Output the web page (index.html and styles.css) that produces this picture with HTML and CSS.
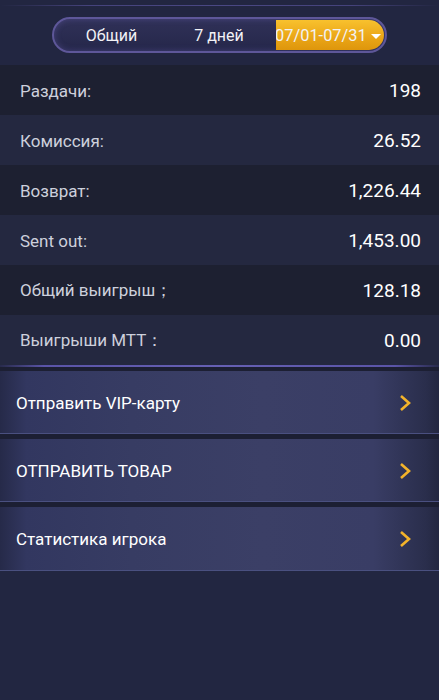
FILE: index.html
```html
<!DOCTYPE html>
<html lang="ru">
<head>
<meta charset="utf-8">
<link rel="stylesheet" href="styles.css">
</head>
<body>
<div class="page">
  <header class="header">
    <div class="top-line"></div>
    <div class="seg">
      <div class="seg-item seg-a">Общий</div>
      <div class="seg-item seg-b">7 дней</div>
      <div class="seg-item seg-c active"><span class="range">07/01-07/31</span><span class="tri"></span></div>
    </div>
  </header>
  <section class="stats">
    <div class="row"><span class="label">Раздачи:</span><span class="val">198</span></div>
    <div class="row"><span class="label">Комиссия:</span><span class="val">26.52</span></div>
    <div class="row"><span class="label">Возврат:</span><span class="val">1,226.44</span></div>
    <div class="row"><span class="label">Sent out:</span><span class="val">1,453.00</span></div>
    <div class="row"><span class="label">Общий выигрыш；</span><span class="val">128.18</span></div>
    <div class="row"><span class="label">Выигрыши MTT：</span><span class="val">0.00</span></div>
  </section>
  <div class="stats-line"></div>
  <nav class="menu">
    <div class="item"><span>Отправить VIP-карту</span><svg class="chev" width="12" height="18" viewBox="0 0 12 18"><path d="M2 2 L10 9 L2 16" fill="none" stroke="#f3b32a" stroke-width="2.6" stroke-linejoin="miter" stroke-linecap="butt"/></svg></div>
    <div class="item"><span>ОТПРАВИТЬ ТОВАР</span><svg class="chev" width="12" height="18" viewBox="0 0 12 18"><path d="M2 2 L10 9 L2 16" fill="none" stroke="#f3b32a" stroke-width="2.6" stroke-linejoin="miter" stroke-linecap="butt"/></svg></div>
    <div class="item"><span>Статистика игрока</span><svg class="chev" width="12" height="18" viewBox="0 0 12 18"><path d="M2 2 L10 9 L2 16" fill="none" stroke="#f3b32a" stroke-width="2.6" stroke-linejoin="miter" stroke-linecap="butt"/></svg></div>
  </nav>
</div>
</body>
</html>
```
FILE: styles.css
```css
* { box-sizing: border-box; }
html, body { margin: 0; padding: 0; }
body {
  background: #222641;
  font-family: Roboto, "Noto Sans", "Liberation Sans", sans-serif;
  color: #fff;
  width: 439px;
  height: 700px;
  overflow: hidden;
}
.page { display: flex; flex-direction: column; }
.header {
  height: 65px;
  display: flex;
  flex-direction: column;
  align-items: center;
  padding-top: 5px;
}
.top-line {
  width: 100%;
  height: 1px;
  background: linear-gradient(90deg, rgba(80,76,140,0) 0%, #45437c 20%, #4a4884 50%, #45437c 80%, rgba(80,76,140,0) 100%);
}
.seg {
  margin-top: 11px;
  width: 335px;
  height: 36px;
  border-radius: 18px;
  border: 2px solid #5e5799;
  padding: 1px;
  background: linear-gradient(180deg, #303158 0%, #25274a 100%);
  box-shadow: inset 0 0 6px rgba(120,110,200,0.35);
  display: flex;
  align-items: stretch;
  overflow: hidden;
}
.seg-item {
  display: flex;
  align-items: center;
  justify-content: center;
  font-size: 16px;
  color: #f2f2f6;
}
.seg-a { width: 113px; }
.seg-b { width: 108px; padding-right: 6px; }
.seg-c {
  flex: 1;
  justify-content: flex-start;
  background: linear-gradient(180deg, #f8c12e 0%, #eaa516 60%, #de960c 100%);
  border-radius: 0 15px 15px 0;
  overflow: hidden;
}
.range { margin-left: -1px; font-size: 16.4px; }
.tri {
  margin-left: 4px;
  width: 0; height: 0;
  border-left: 5px solid transparent;
  border-right: 5px solid transparent;
  border-top: 5px solid #fff;
  margin-top: 2px;
}
.stats { display: flex; flex-direction: column; }
.row {
  height: 50px;
  display: flex;
  align-items: center;
  justify-content: space-between;
  padding: 1px 18px 0 20px;
}
.row:nth-child(odd) { background: #1d2031; }
.row:nth-child(even) { background: #242840; }
.label { font-size: 17px; color: #cdd0dc; }
.val { font-size: 19px; color: #fff; }
.stats-line {
  height: 2px;
  background: linear-gradient(90deg, rgba(90,84,170,0.1) 0%, #5a54a8 10%, #6660b4 50%, #5a54a8 90%, rgba(90,84,170,0.1) 100%);
}
.menu {
  display: flex;
  flex-direction: column;
  padding-top: 4px;
  background: #1c1f33;
}
.item {
  height: 68px;
  display: flex;
  align-items: center;
  justify-content: space-between;
  padding: 2px 28px 6px 16px;
  font-size: 17px;
  color: #fff;
  background:
    linear-gradient(180deg, rgba(0,0,0,0) 0, rgba(0,0,0,0) 62px, #4a5080 62px, #4a5080 63px, #1c1f33 63px, #1c1f33 68px),
    linear-gradient(90deg, #262a49 0%, #323760 6%, #373c63 30%, #3b3f66 60%, #393d65 85%, #2a2e4c 97%, #232741 100%);
}
.item:last-child {
  height: 68px;
  background:
    linear-gradient(180deg, rgba(0,0,0,0) 0, rgba(0,0,0,0) 63px, #4a5080 63px, #4a5080 64px, #222641 64px, #222641 68px),
    linear-gradient(90deg, #262a49 0%, #323760 6%, #373c63 30%, #3b3f66 60%, #393d65 85%, #2a2e4c 97%, #232741 100%);
}
.chev { display: block; }
```
